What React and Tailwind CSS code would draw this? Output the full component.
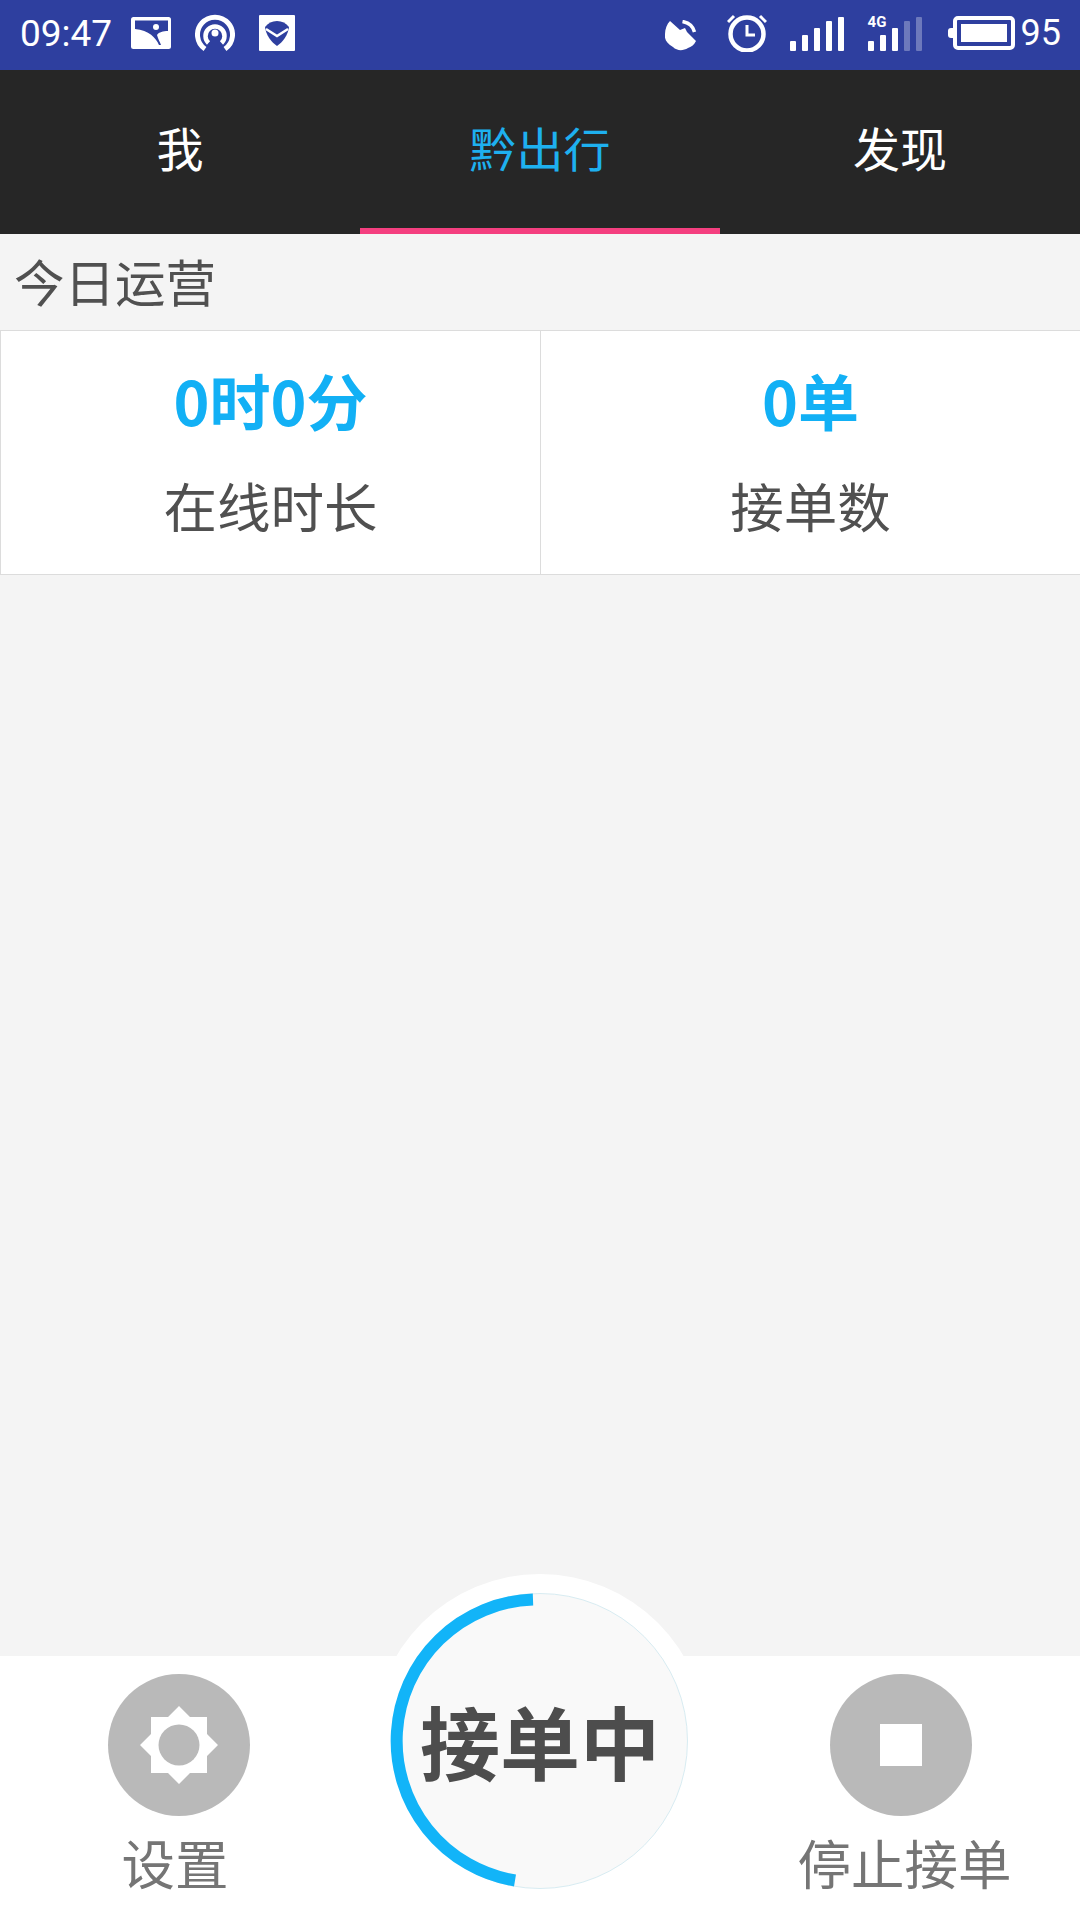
import React from 'react'

function PictureIcon() {
  return (
    <svg width="40" height="32" viewBox="0 0 40 32" className="shrink-0">
      <rect width="40" height="32" rx="2.500" fill="#fff" />
      <path fill="#2e3f9f" d="M4 3.500H37V14C32 14 28 15 26 18C27 22 29 25 30 28H28C25 21 18 13 4 12Z" />
      <circle cx="25" cy="10" r="3" fill="#fff" />
    </svg>
  )
}

function BroadcastIcon() {
  return (
    <svg width="40" height="38" viewBox="0 0 40 38" fill="none" stroke="#fff" className="shrink-0">
      <path strokeWidth="5" d="M10 35A17.5 17.5 0 1 1 30 35" />
      <path strokeWidth="4.500" d="M13.500 29A9.500 9.500 0 1 1 26.500 29" />
      <circle cx="20" cy="19" r="3.500" fill="#fff" stroke="none" />
    </svg>
  )
}

function VeeIcon() {
  return (
    <svg width="36" height="36" viewBox="0 0 36 36" className="shrink-0">
      <rect width="36" height="36" rx="1" fill="#fff" />
      <path fill="#2e3f9f" d="M18 6C23 6 27 8 30 12C29 20 24 27 18 31C12 27 7 20 6 12C9 8 13 6 18 6Z" />
      <path fill="none" stroke="#fff" strokeWidth="2.500" d="M7 14L18 21L29 14" />
    </svg>
  )
}

function DishIcon() {
  return (
    <svg width="32" height="32" viewBox="0 0 32 32" className="shrink-0">
      <path fill="#fff" d="M5 1L15 10L20 8L22 12L31 21C29 25 26 27 23 28C18 31 12 31 8 27C2 24 -1 19 0 14C0 9 2 4 5 1Z" />
      <path fill="none" stroke="#fff" strokeWidth="3.500" d="M17.500 1.500C23 2.500 28 6 29.500 12" />
    </svg>
  )
}

function AlarmIcon() {
  return (
    <svg width="40" height="38" viewBox="0 0 40 38" fill="none" stroke="#fff" className="shrink-0">
      <circle cx="20" cy="20" r="16.500" strokeWidth="4.500" />
      <path strokeWidth="3" d="M20 11V21H28" />
      <path strokeWidth="3" d="M1 8L7 2M39 8L33 2" />
    </svg>
  )
}

function SignalBars({ dim = 0 }) {
  const heights = [10, 16, 23, 30, 34]
  return (
    <div className="flex items-end gap-[6px] h-[34px]">
      {heights.map((h, i) => (
        <div
          key={i}
          className={i >= 5 - dim ? 'w-[6px] rounded-[1px] bg-white/30' : 'w-[6px] rounded-[1px] bg-white'}
          style={{ height: h }}
        />
      ))}
    </div>
  )
}

function BatteryIcon() {
  return (
    <div className="flex items-center">
      <div className="w-[5px] h-[10px] rounded-l-[3px] bg-white" />
      <div className="w-[62px] h-[34px] rounded-[5px] border-[4px] border-white p-[4px]">
        <div className="w-full h-full bg-white" />
      </div>
    </div>
  )
}

function StatusBar() {
  return (
    <div className="h-[70px] pb-[4px] bg-[#2e3f9f] flex items-center text-white font-['Roboto',sans-serif]">
      <span className="ml-[20px] w-[90px] text-[37px] leading-none">09:47</span>
      <div className="ml-[21px]"><PictureIcon /></div>
      <div className="ml-[24px]"><BroadcastIcon /></div>
      <div className="ml-[24px]"><VeeIcon /></div>
      <div className="ml-auto flex items-center">
        <div className="mt-[5px]"><DishIcon /></div>
        <div className="ml-[30px]"><AlarmIcon /></div>
        <div className="ml-[23px] mt-[1px]"><SignalBars /></div>
        <div className="ml-[24px] mt-[1px] relative">
          <SignalBars dim={2} />
          <span className="absolute left-0 top-[-2px] text-[15px] leading-none font-bold">4G</span>
        </div>
        <div className="ml-[26px]"><BatteryIcon /></div>
        <span className="ml-[6px] mr-[19px] text-[36px] leading-none">95</span>
      </div>
    </div>
  )
}

function TabBar() {
  const tabs = ['我', '黔出行', '发现']
  return (
    <div className="h-[164px] bg-[#262626] grid grid-cols-[360px_360px_360px] text-[47px]">
      {tabs.map((t, i) => (
        <div
          key={t}
          className={
            i === 1
              ? 'flex items-center justify-center border-b-[6px] border-[#f43f7f] text-[#1eb0ef] pb-[4px]'
              : 'flex items-center justify-center border-b-[6px] border-transparent text-white pb-[4px]'
          }
        >
          {t}
        </div>
      ))}
    </div>
  )
}

function Stat({ value, label }) {
  return (
    <div className="flex flex-col items-center pt-[34px] border-l border-[#dcdcdc]">
      <div className="text-[61px] leading-[70px] font-bold text-[#12b0f5]">{value}</div>
      <div className="mt-[40px] text-[53.5px] leading-[60px] text-[#505050]">{label}</div>
    </div>
  )
}

function SettingsIcon() {
  return (
    <svg width="78" height="78" viewBox="0 0 78 78">
      <path
        fill="#fff"
        d="M39 0L50 11H67V28L78 39L67 50V67H50L39 78L28 67H11V50L0 39L11 28V11H28Z"
      />
      <circle cx="39" cy="39" r="20.500" fill="#b9b9b9" />
    </svg>
  )
}

function RunningButton() {
  // arc runs anticlockwise from just left of the top to just left of the bottom
  return (
    <div className="absolute left-[373px] top-[-82px] w-[334px] h-[334px] rounded-full bg-white flex items-center justify-center">
      <div className="relative w-[296px] h-[296px] rounded-full bg-[#f9f9f9] border border-[#d8ecf2] flex items-center justify-center">
        <svg width="296" height="296" viewBox="0 0 296 296" className="absolute left-[-1px] top-[-1px] overflow-visible">
          <path d="M141 6.500A141.500 141.500 0 0 0 123 287.500" fill="none" stroke="#12b4f8" strokeWidth="12" />
        </svg>
        <span className="relative text-[80px] leading-none font-bold text-[#4d4d4d] mb-[4px]">接单中</span>
      </div>
    </div>
  )
}

function BottomBar() {
  return (
    <div className="relative h-[264px] bg-white grid grid-cols-[360px_360px_360px]">
      <div className="flex flex-col items-center pt-[18px]">
        <div className="w-[142px] h-[142px] mr-[2px] rounded-full bg-[#b9b9b9] flex items-center justify-center">
          <SettingsIcon />
        </div>
        <div className="mt-[16px] pr-[10px] text-[53.5px] leading-[60px] text-[#757575]">设置</div>
      </div>
      <div />
      <div className="flex flex-col items-center pt-[18px]">
        <div className="w-[142px] h-[142px] ml-[2px] rounded-full bg-[#b9b9b9] flex items-center justify-center">
          <div className="w-[42px] h-[42px] bg-white" />
        </div>
        <div className="mt-[16px] pl-[9px] text-[53.5px] leading-[60px] text-[#757575]">停止接单</div>
      </div>
      <RunningButton />
    </div>
  )
}

export default function App() {
  return (
    <div className="w-[1080px] h-[1920px] flex flex-col overflow-hidden bg-[#f4f4f4] font-['Noto_Sans_CJK_SC','Noto_Sans',sans-serif]">
      <StatusBar />
      <TabBar />
      <div className="h-[96px] flex items-center pl-[14px] pb-[4px] text-[50.5px] leading-none text-[#505050]">今日运营</div>
      <div className="h-[245px] grid grid-cols-2 bg-white border-y border-[#dcdcdc]">
        <Stat value="0时0分" label="在线时长" />
        <Stat value="0单" label="接单数" />
      </div>
      <div className="flex-1" />
      <BottomBar />
    </div>
  )
}
